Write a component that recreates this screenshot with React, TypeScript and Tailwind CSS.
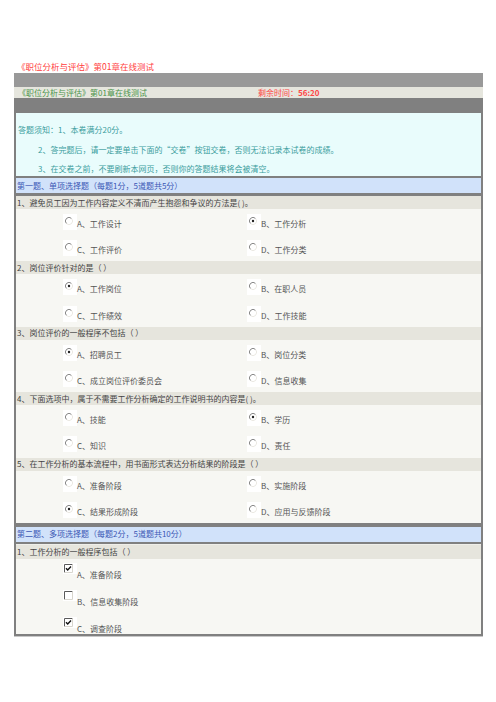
import type { ReactNode } from "react";

type Opt = { label: string; checked?: boolean };
type Single = { title: string; options: Opt[] };

const single: Single[] = [
  {
    title: "1、避免员工因为工作内容定义不清而产生抱怨和争议的方法是( )。",
    options: [
      { label: "A、工作设计" },
      { label: "B、工作分析", checked: true },
      { label: "C、工作评价" },
      { label: "D、工作分类" },
    ],
  },
  {
    title: "2、岗位评价针对的是（ ）",
    options: [
      { label: "A、工作岗位", checked: true },
      { label: "B、在职人员" },
      { label: "C、工作绩效" },
      { label: "D、工作技能" },
    ],
  },
  {
    title: "3、岗位评价的一般程序不包括（ ）",
    options: [
      { label: "A、招聘员工", checked: true },
      { label: "B、岗位分类" },
      { label: "C、成立岗位评价委员会" },
      { label: "D、信息收集" },
    ],
  },
  {
    title: "4、下面选项中，属于不需要工作分析确定的工作说明书的内容是( )。",
    options: [
      { label: "A、技能" },
      { label: "B、学历", checked: true },
      { label: "C、知识" },
      { label: "D、责任" },
    ],
  },
  {
    title: "5、在工作分析的基本流程中，用书面形式表达分析结果的阶段是（ ）",
    options: [
      { label: "A、准备阶段" },
      { label: "B、实施阶段" },
      { label: "C、结果形成阶段", checked: true },
      { label: "D、应用与反馈阶段" },
    ],
  },
];

const multi: Opt[] = [
  { label: "A、准备阶段", checked: true },
  { label: "B、信息收集阶段" },
  { label: "C、调查阶段", checked: true },
];

function Radio({ checked }: { checked?: boolean }) {
  return (
    <div className="mt-[5px] h-[16px] w-[14px] shrink-0 bg-white pl-[2px] pt-[3px]">
      <svg width="8" height="8" viewBox="0 0 12 12">
        <circle cx="6" cy="6" r="5" fill="#fff" />
        <path d="M2.2 9.8 A5.2 5.2 0 0 1 9.8 2.2" fill="none" stroke="#7a7a7a" strokeWidth="1.4" />
        <path d="M9.8 2.2 A5.2 5.2 0 0 1 2.2 9.8" fill="none" stroke="#e4e2da" strokeWidth="1.2" />
        {checked && <circle cx="6" cy="6" r="1.8" fill="#222" />}
      </svg>
    </div>
  );
}

function Check({ checked }: { checked?: boolean }) {
  return (
    <div className="mt-[4px] h-[11px] w-[14px] shrink-0 bg-white pl-[1px] pt-[1px]">
      <svg width="9" height="9" viewBox="0 0 9 9">
        <rect x="0" y="0" width="9" height="9" fill="#fff" />
        <path d="M0.5 8.5 V0.5 H8.5" fill="none" stroke="#5a5a5a" strokeWidth="1" />
        <path d="M8.5 0.5 V8.5 H0.5" fill="none" stroke="#d8d6ce" strokeWidth="1" />
        {checked && (
          <path d="M2 4.2 L3.7 6 L7 2.6" fill="none" stroke="#111" strokeWidth="1.4" />
        )}
      </svg>
    </div>
  );
}

function Option({ opt, multiple }: { opt: Opt; multiple?: boolean }) {
  return (
    <div className="flex items-start">
      {multiple ? <Check checked={opt.checked} /> : <Radio checked={opt.checked} />}
      <span className={`${multiple ? "mt-[11px]" : "mt-[10px]"} text-[8px] leading-[10px] text-[#555]`}>
        {opt.label}
      </span>
    </div>
  );
}

function QuestionRow({ children, tall }: { children: ReactNode; tall?: boolean }) {
  return (
    <div
      className={`flex ${tall ? "h-[14px]" : "h-[13px]"} items-center bg-[#e6e5dd] pl-[1px] text-[8px] text-[#444]`}
    >
      {children}
    </div>
  );
}

function SectionHead({ children }: { children: ReactNode }) {
  return (
    <div className="flex h-[15px] items-center bg-[#d1e2fa] pl-[1px] text-[8px] text-[#3b57b5]">
      {children}
    </div>
  );
}

export default function App() {
  return (
    <div className="min-h-[702px] w-[496px] bg-white font-['Noto_Sans_CJK_SC',sans-serif]">
      <div className="pl-[17px] pt-[60px] text-[8.5px] leading-[12px] text-[#ff3d3d]">
        《职位分析与评估》第01章在线测试
      </div>

      <div className="ml-[14px] mt-[1px] w-[469px]">
        <div className="h-[14px] bg-[#999999]" />
        <div className="flex h-[11px] items-center bg-[#e6e6de] text-[8px]">
          <span className="w-[244px] pl-[4px] text-[#4a934a]">《职位分析与评估》第01章在线测试</span>
          <span className="text-[#ff4545]">
            剩余时间：<b className="font-bold">56:20</b>
          </span>
        </div>
        <div className="h-[15px] bg-[#808080]" />

        <div className="bg-[#808080] px-[2px]">
          <div className="h-[63px] bg-[#e9fcfc] pl-[2px] pt-[7px] text-[8px] leading-[19.5px] text-[#3a9c9c]">
            <div>答题须知：1、本卷满分20分。</div>
            <div className="pl-[20px]">
              2、答完题后，请一定要单击下面的“交卷”按钮交卷，否则无法记录本试卷的成绩。
            </div>
            <div className="pl-[20px]">3、在交卷之前，不要刷新本网页，否则你的答题结果将会被清空。</div>
          </div>

          <div className="h-[2px]" />
          <SectionHead>第一题、单项选择题（每题1分，5道题共5分）</SectionHead>
          <div className="h-[3px]" />

          {single.map((q) => (
            <div key={q.title} className="h-[65.4px] bg-[#f7f7f3]">
              <QuestionRow>{q.title}</QuestionRow>
              <div className="grid grid-cols-[184px_184px] pl-[47px]">
                {q.options.map((o) => (
                  <div key={o.label} className="h-[26.2px]">
                    <Option opt={o} />
                  </div>
                ))}
              </div>
            </div>
          ))}

          <div className="h-[4px]" />
          <SectionHead>第二题、多项选择题（每题2分，5道题共10分）</SectionHead>
          <div className="h-[2px]" />
          <div className="h-[1px] bg-[#efefea]" />

          <div className="h-[89px] bg-[#f7f7f3]">
            <QuestionRow tall>1、工作分析的一般程序包括（ ）</QuestionRow>
            <div className="pl-[47px]">
              {multi.map((o) => (
                <div key={o.label} className="h-[27px]">
                  <Option opt={o} multiple />
                </div>
              ))}
            </div>
          </div>
          <div className="h-[2px]" />
        </div>
        <div className="h-[1px] bg-[#c8c8c8]" />
      </div>
    </div>
  );
}
